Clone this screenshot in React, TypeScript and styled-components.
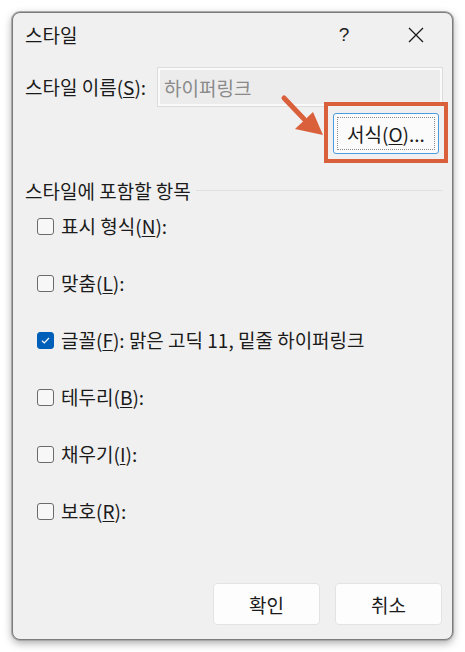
import React from "react";
import styled, { createGlobalStyle } from "styled-components";

const Global = createGlobalStyle`
  html, body {
    margin: 0;
    padding: 0;
    background: #ffffff;
  }
  body {
    font-family: "Noto Sans CJK KR", "Noto Sans", sans-serif;
    color: #1b1b1b;
  }
`;

const Page = styled.div`
  position: relative;
  width: 465px;
  height: 652px;
  padding: 12px;
  box-sizing: border-box;
`;

const Dialog = styled.div`
  position: relative;
  width: 441px;
  height: 628px;
  box-sizing: border-box;
  background: #f0f0f0;
  border: 1px solid #7c7c7c;
  border-radius: 8px;
  box-shadow: 0 0 0 1px #a9a9a9, 0 3px 8px rgba(0, 0, 0, 0.35);
  display: flex;
  flex-direction: column;
  padding: 0 10px 14px 12px;
`;

const TitleBar = styled.div`
  display: flex;
  align-items: center;
  height: 44px;
`;

const Title = styled.div`
  flex: 1;
  font-size: 19px;
  line-height: 22px;
  color: #1a1a1a;
`;

const HelpMark = styled.div`
  width: 20px;
  text-align: center;
  font-family: "Liberation Sans", sans-serif;
  font-size: 19px;
  color: #222;
  margin-right: 52px;
`;

const CloseBox = styled.div`
  width: 20px;
  height: 20px;
  display: flex;
  align-items: center;
  justify-content: center;
  margin-right: 16px;
`;

const NameRow = styled.div`
  display: flex;
  align-items: center;
  margin-top: 11px;
`;

const Label = styled.div`
  width: 133px;
  font-size: 19px;
  line-height: 22px;
`;

const Key = styled.span`
  text-decoration: underline;
  text-underline-offset: 2px;
  text-decoration-thickness: 1px;
`;

const NameInput = styled.div`
  flex: 1;
  height: 38px;
  box-sizing: border-box;
  border: 2px solid #fafafa;
  outline: 1px solid #dcdcdc;
  background: #ececec;
  display: flex;
  align-items: center;
  padding-left: 4px;
  font-size: 19px;
  color: #8a8a8a;
`;

const FormatRow = styled.div`
  display: flex;
  justify-content: flex-end;
  margin-top: -4px;
  margin-right: -6px;
`;

const Highlight = styled.div`
  border: 4px solid #d9603b;
  padding: 7px 5px 5px 5px;
  background: #f0f0f0;
`;

const FormatButton = styled.div`
  width: 106px;
  height: 41px;
  box-sizing: border-box;
  background: #fbfbfb;
  border: 1px solid #4a9be0;
  border-radius: 3px;
  padding: 3px;
  display: flex;
`;

const FocusRing = styled.div`
  flex: 1;
  border: 1px dotted #8a8a8a;
  display: flex;
  align-items: center;
  justify-content: center;
  font-size: 19px;
  color: #1a1a1a;
`;

const SectionHead = styled.div`
  display: flex;
  align-items: center;
  gap: 5px;
  margin-top: 17px;
  font-size: 19px;
  line-height: 22px;
`;

const Rule = styled.div`
  flex: 1;
  height: 1px;
  background: #e0e0e0;
  margin-top: -2px;
`;

const Options = styled.div`
  display: flex;
  flex-direction: column;
  gap: 33px;
  margin-top: 12px;
  padding-left: 12px;
`;

const OptionRow = styled.label`
  display: flex;
  align-items: center;
  gap: 7px;
  height: 24px;
  font-size: 19px;
  line-height: 22px;
`;

const Box = styled.span<{ $checked?: boolean }>`
  width: 17px;
  height: 17px;
  flex: none;
  box-sizing: border-box;
  border-radius: 3px;
  border: 1px solid ${p => (p.$checked ? "#005fb8" : "#6b6b6b")};
  background: ${p => (p.$checked ? "#005fb8" : "#f7f7f7")};
  display: flex;
  align-items: center;
  justify-content: center;
`;

const Footer = styled.div`
  margin-top: auto;
  display: flex;
  justify-content: flex-end;
  gap: 15px;
`;

const PushButton = styled.div`
  width: 107px;
  height: 42px;
  box-sizing: border-box;
  background: #fdfdfd;
  border: 1px solid #e3e3e3;
  border-radius: 4px;
  display: flex;
  align-items: center;
  justify-content: center;
  font-size: 19px;
  color: #1a1a1a;
`;

const Arrow = styled.svg`
  position: absolute;
  left: 0;
  top: 0;
  pointer-events: none;
`;

const options = [
  { text: "표시 형식", key: "N", rest: ":" },
  { text: "맞춤", key: "L", rest: ":" },
  { text: "글꼴", key: "F", rest: ": 맑은 고딕 11, 밑줄 하이퍼링크", checked: true },
  { text: "테두리", key: "B", rest: ":" },
  { text: "채우기", key: "I", rest: ":" },
  { text: "보호", key: "R", rest: ":" },
];

export default function App() {
  return (
    <Page>
      <Global />
      <Dialog>
        <TitleBar>
          <Title>스타일</Title>
          <HelpMark>?</HelpMark>
          <CloseBox>
            <svg width="16" height="16" viewBox="0 0 16 16">
              <path d="M1 1 L15 15 M15 1 L1 15" stroke="#1a1a1a" strokeWidth="1.3" />
            </svg>
          </CloseBox>
        </TitleBar>

        <NameRow>
          <Label>
            스타일 이름(<Key>S</Key>):
          </Label>
          <NameInput>하이퍼링크</NameInput>
        </NameRow>

        <FormatRow>
          <Highlight>
            <FormatButton>
              <FocusRing>
                서식(<Key>O</Key>)...
              </FocusRing>
            </FormatButton>
          </Highlight>
        </FormatRow>

        <SectionHead>
          스타일에 포함할 항목
          <Rule />
        </SectionHead>

        <Options>
          {options.map(o => (
            <OptionRow key={o.key}>
              <Box $checked={o.checked}>
                {o.checked && (
                  <svg width="11" height="11" viewBox="0 0 11 11">
                    <path d="M2 5.8 L4.3 8 L9 3" fill="none" stroke="#ffffff" strokeWidth="1.2" />
                  </svg>
                )}
              </Box>
              <span>
                {o.text}(<Key>{o.key}</Key>){o.rest}
              </span>
            </OptionRow>
          ))}
        </Options>

        <Footer>
          <PushButton>확인</PushButton>
          <PushButton>취소</PushButton>
        </Footer>
      </Dialog>

      <Arrow width="465" height="652" viewBox="0 0 465 652">
        <line x1="284" y1="98" x2="304" y2="119" stroke="#d9603b" strokeWidth="5" strokeLinecap="round" />
        <polygon points="295,129 313,112 323,135" fill="#d9603b" />
      </Arrow>
    </Page>
  );
}
